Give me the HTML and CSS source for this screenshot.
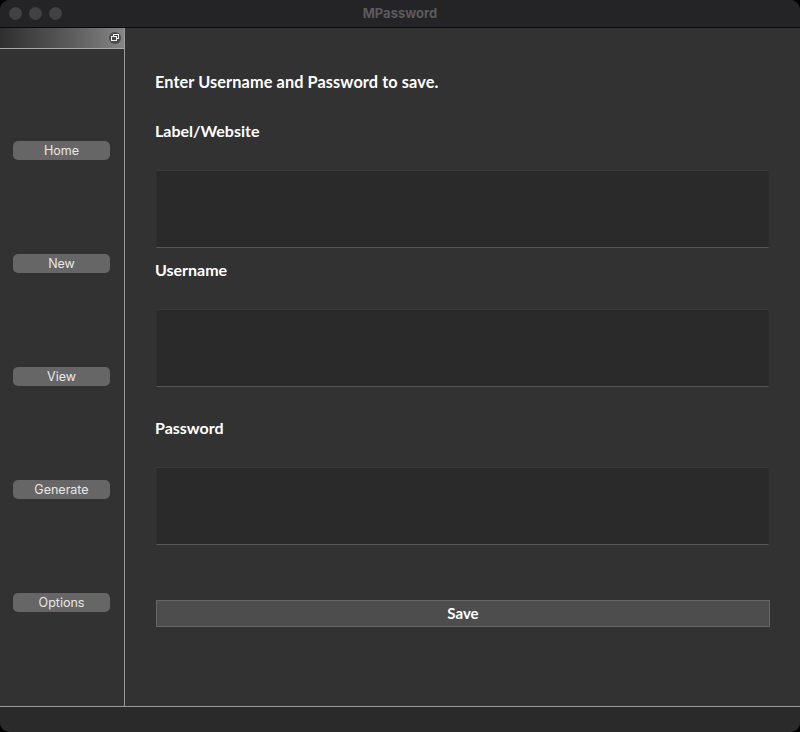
FILE: index.html
```html
<!DOCTYPE html>
<html>
<head>
<meta charset="utf-8">
<title>MPassword</title>
<link rel="stylesheet" href="styles.css">
</head>
<body>
<div class="window">
  <div class="titlebar">
    <div class="lights">
      <span class="light"></span><span class="light"></span><span class="light"></span>
    </div>
    <div class="title">MPassword</div>
  </div>
  <div class="content">
    <aside class="sidebar">
      <div class="sidebar-head">
        <span class="restore">
          <svg width="12" height="12" viewBox="0 0 12 12">
            <circle cx="6" cy="6" r="6" fill="#4a4a4a"/>
            <rect x="4.5" y="2.5" width="5" height="4" fill="none" stroke="#f2f2f2" stroke-width="1"/>
            <rect x="2.5" y="4.5" width="5" height="4" fill="#4a4a4a" stroke="#f2f2f2" stroke-width="1"/>
          </svg>
        </span>
      </div>
      <nav class="nav">
        <button class="nav-btn">Home</button>
        <button class="nav-btn">New</button>
        <button class="nav-btn">View</button>
        <button class="nav-btn">Generate</button>
        <button class="nav-btn">Options</button>
      </nav>
    </aside>
    <main class="main">
      <h1 class="heading">Enter Username and Password to save.</h1>
      <label class="label label-first">Label/Website</label>
      <div class="field"></div>
      <label class="label label-user">Username</label>
      <div class="field"></div>
      <label class="label label-pass">Password</label>
      <div class="field"></div>
      <button class="save">Save</button>
    </main>
  </div>
  <div class="statusbar"></div>
</div>
</body>
</html>
```
FILE: styles.css
```css
html, body {
  margin: 0;
  padding: 0;
  background: #000;
}
.window {
  width: 800px;
  height: 732px;
  display: flex;
  flex-direction: column;
  background: #323232;
  border-radius: 10px;
  overflow: hidden;
}
.titlebar {
  height: 27px;
  flex: none;
  background: #242325;
  border-bottom: 1px solid #0a0a0a;
  display: flex;
  align-items: center;
  position: relative;
}
.lights {
  display: flex;
  gap: 7px;
  padding-left: 9px;
}
.light {
  width: 13px;
  height: 13px;
  border-radius: 50%;
  background: #414043;
}
.title {
  position: absolute;
  left: 0;
  right: 0;
  top: 0;
  line-height: 27px;
  text-align: center;
  font-family: Inter, "Liberation Sans", sans-serif;
  font-weight: 700;
  font-size: 13px;
  color: #5b5a5c;
}
.content {
  flex: 1;
  display: flex;
  min-height: 0;
}
.sidebar {
  width: 124px;
  flex: none;
  border-right: 1px solid #9a9a9a;
  display: flex;
  flex-direction: column;
}
.sidebar-head {
  height: 20px;
  border-bottom: 1px solid #a8a8a8;
  background: linear-gradient(to right, #2e2e2e 0%, #5a5a5a 55%, #858585 100%);
  display: flex;
  justify-content: flex-end;
  align-items: center;
  padding-right: 3px;
}
.restore {
  display: flex;
}
.nav {
  display: flex;
  flex-direction: column;
  align-items: flex-start;
  padding: 92px 0 0 13px;
  gap: 94px;
}
.nav-btn {
  width: 97px;
  height: 19px;
  margin: 0;
  padding: 0;
  border: none;
  border-radius: 5px;
  background: #666666;
  color: #e8e8e8;
  font-family: Inter, "Liberation Sans", sans-serif;
  font-size: 12.5px;
  line-height: 19px;
  text-align: center;
}
.main {
  flex: 1;
  padding: 0 31px 0 30px;
  display: flex;
  flex-direction: column;
  font-family: Lato, "Open Sans", sans-serif;
  color: #ffffff;
}
.heading {
  margin: 44px 0 0 0;
  font-size: 16.3px;
  line-height: 20px;
  font-weight: 700;
  letter-spacing: 0.1px;
}
.label {
  display: block;
  font-size: 16px;
  line-height: 20px;
  font-weight: 700;
}
.label-first { margin-top: 29px; }
.label-user { margin-top: 12px; }
.label-pass { margin-top: 31px; }
.field {
  margin: 29px 0 0 1px;
  height: 76px;
  background: #2a2a2a;
  border-top: 1px solid #3a3a3a;
  border-left: 1px solid #2e2e2e;
  border-right: 1px solid #2e2e2e;
  border-bottom: 1px solid #575757;
}
.save {
  margin: 55px -1px 0 1px;
  height: 27px;
  padding: 0;
  background: #4d4d4d;
  border: 1px solid #666666;
  color: #ffffff;
  font-family: Lato, "Open Sans", sans-serif;
  font-weight: 700;
  font-size: 15px;
  line-height: 25px;
  text-align: center;
}
.statusbar {
  height: 25px;
  flex: none;
  background: #2a2a2a;
  border-top: 1px solid #9a9a9a;
}
```
